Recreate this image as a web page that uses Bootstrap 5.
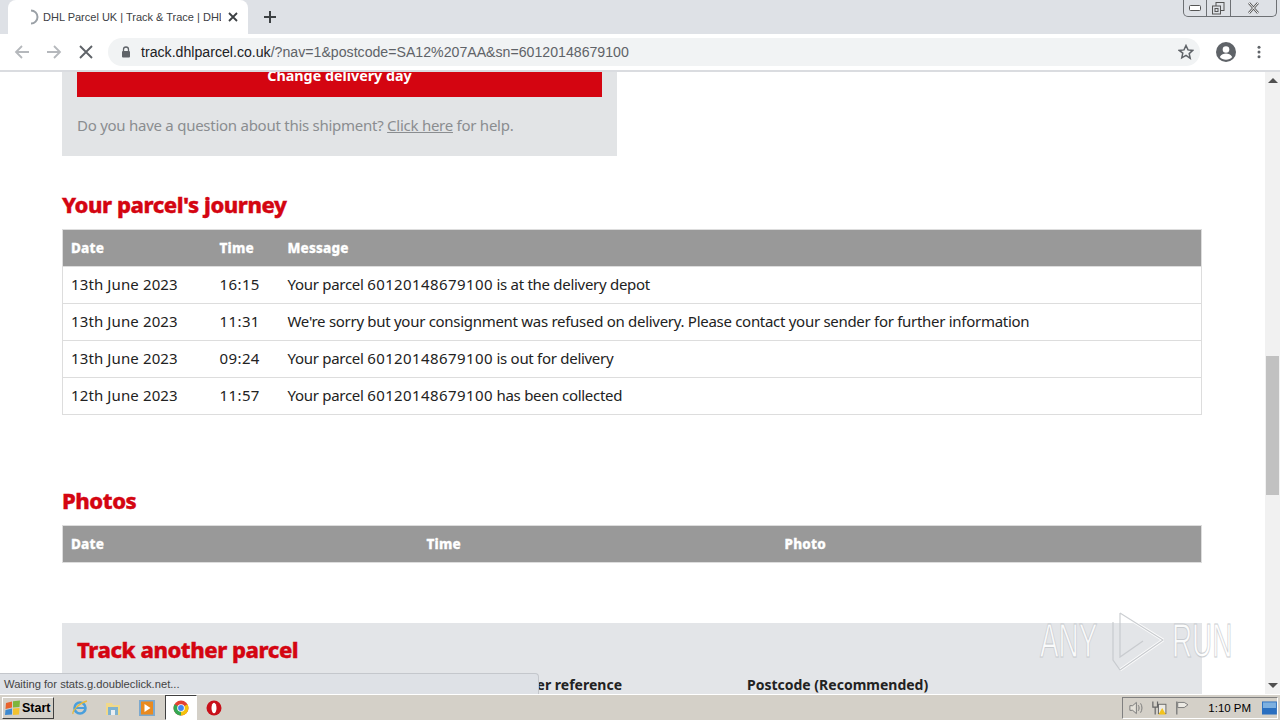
<!DOCTYPE html>
<html lang="en">
<head>
<meta charset="utf-8">
<title>DHL Parcel UK | Track &amp; Trace</title>
<link rel="stylesheet" href="https://cdn.jsdelivr.net/npm/bootstrap@5.3.0/dist/css/bootstrap.min.css">
<style>
html,body{height:720px;overflow:hidden;background:#fff}
body{font-family:"Noto Sans","Liberation Sans",sans-serif;position:relative}
.tabstrip{height:34px;background:#dee1e6;padding-left:8px}
.browsertab{width:240px;height:34px;background:#fff;border-radius:8px 8px 0 0;padding-left:16px;font:11px "Liberation Sans",sans-serif;color:#3c4043;white-space:nowrap}
.tabtitle{width:178px;overflow:hidden;margin-left:3px}
.tabclose{margin-left:7px}
.newtab{margin-left:15px;margin-bottom:10px}
.winbtns{margin-left:auto;margin-right:3px;height:17px;width:94px;border:1px solid #6d7074;border-top:0;border-radius:0 0 5px 5px;align-self:flex-start}
.winbtns>span{flex:1 1 auto;border-right:1px solid #6d7074}
.winbtns>span:last-child{border-right:0;flex:0 0 45px}
.toolbar{height:38px;background:#fff;border-bottom:2px solid #dadce0;padding-left:13px}
.navicon{width:18px;margin-right:14px}
.navstop{margin-right:9px}
.omnibox{margin-left:4px;width:1092px;height:28px;background:#f1f3f4;border-radius:14px;padding:0 6px 0 13px;font:14.15px "Liberation Sans",sans-serif;color:#202124;white-space:nowrap}
.urlrest{color:#5f6368}
.urltext{margin-left:10px}
.avatar{margin-left:16px}
.dots{margin-left:19px}
.pagearea{height:622px;overflow:hidden}
.pagecontent{width:1265px;height:622px;overflow:hidden}
.pageinner{padding-left:62px;width:1202px;margin-top:-24px}
.scrolltrack{width:15px;background:#f1f1f1;height:622px;position:relative}
.scrollthumb{position:absolute;left:1px;right:1px;top:284px;height:139px;background:#c1c1c1}
.scrollup,.scrolldown{position:absolute;left:3px;width:0;height:0;border-left:5px solid transparent;border-right:5px solid transparent}
.scrollup{top:6px;border-bottom:5px solid #505050}
.scrolldown{bottom:6px;border-top:5px solid #505050}
.greypanel{width:555px;height:108px;background:#e2e4e6;padding:0 15px}
.redbtn{height:49px;width:525px;background:#d40511;color:#fff;font-weight:700;font-size:14.3px;line-height:1;padding-top:21px;text-align:center;border-radius:0}
.helptext{margin-top:18px;font-size:15px;color:#8a8d90;line-height:20px;letter-spacing:-.26px}
.helptext a{color:#8a8d90}
.redhead{color:#d40511;font-weight:800;font-size:22px;line-height:30px;margin:0;letter-spacing:-.45px;-webkit-text-stroke:.4px #d40511}
.headjourney{margin-top:33px;margin-bottom:10px}
.headphotos{margin-top:70px;margin-bottom:10px}
.trktable{width:1140px;margin:0;border-collapse:collapse;table-layout:fixed;font-size:15px;color:#222}
.trktable th,.trktable td{padding:0 8px 2px;height:37px;border:1px solid #ddd;border-left-width:0;border-right-width:0;vertical-align:middle;white-space:nowrap;letter-spacing:-.29px}
.trktable tr>*:first-child{border-left-width:1px}
.trktable tr>*:last-child{border-right-width:1px}
.trktable th{background:#999;color:#fff;font-weight:800;font-size:13.5px;letter-spacing:.2px;-webkit-text-stroke:.3px #fff;padding-bottom:0}
.trktable td.datecell{letter-spacing:.12px}
.trktable td.timecell{letter-spacing:.4px}
.parcelnum{letter-spacing:.4px}
.trackpanel{margin-top:60px;width:1140px;height:100px;background:#e3e5e8;padding:11px 15px 0}
.trackfields{display:grid;grid-template-columns:545px 125px 1fr;margin-top:11px;font-weight:700;font-size:14px;line-height:20px;color:#222;white-space:nowrap}
.fieldone{text-align:right}
.fieldtwo{grid-column:3}
.statusbubble{position:absolute;left:0;top:673px;width:539px;height:21px;background:#dee1e6;border:1px solid #c4c7cc;border-left:0;border-bottom:0;border-radius:0 4px 0 0;font:11.2px/20px "Liberation Sans",sans-serif;color:#444;padding-left:4px}
.taskbar{height:26px;background:#d4d0c8;border-top:1px solid #fff;padding-left:2px}
.startbtn{width:52px;height:22px;background:#d4d0c8;border:1px solid;border-color:#fff #404040 #404040 #fff;font:700 12.5px "Liberation Sans",sans-serif;color:#000;padding-left:1px;gap:1px}
.tbicon{width:18px;height:18px}
.tbiconwrap{width:32px;height:25px;background:#fff;border:1px solid;border-color:#404040 #fff #fff #404040}
.taskicons{margin-left:17px}
.gapa{margin-right:15px}
.gapb{margin-right:16px}
.gapc{margin-right:9px}
.tray{margin-left:auto;margin-right:2px;height:22px;width:156px;border:1px solid;border-color:#808080 #fff #fff #808080;font:11.5px "Liberation Sans",sans-serif;color:#000;padding-left:5px;white-space:nowrap}
.trayflag{margin-left:6px}
.clock{margin-left:18px}
.trayshow{margin-left:11px}
.anywm{position:absolute;left:1040px;top:610px;opacity:.85;pointer-events:none;height:62px}
.anyword{display:inline-block;width:60px;overflow:visible;font:400 48px/62px "Liberation Sans",sans-serif;color:#fff;-webkit-text-stroke:1px #c4c7cb;transform:scaleX(.58);transform-origin:left center}
.logoplay{margin:0 8px 0 12px}
</style>
</head>
<body>
<div class="tabstrip d-flex align-items-end">
  <div class="browsertab d-flex align-items-center">
    <svg width="16" height="16" viewBox="0 0 16 16"><path d="M7 1.500a6.500 6.500 0 0 1 0 13" fill="none" stroke="#9aa0a6" stroke-width="2"/></svg>
    <span class="tabtitle">DHL Parcel UK | Track &amp; Trace | DHL</span>
    <svg class="tabclose" width="10" height="10" viewBox="0 0 10 10"><path d="M1 1l8 8M9 1l-8 8" stroke="#3c4043" stroke-width="1.800"/></svg>
  </div>
  <svg class="newtab" width="14" height="14" viewBox="0 0 14 14"><path d="M7 1v12M1 7h12" stroke="#3c4043" stroke-width="2"/></svg>
  <div class="winbtns d-flex">
    <span class="d-flex align-items-center justify-content-center"><svg width="12" height="6" viewBox="0 0 12 6"><rect x=".5" y=".5" width="11" height="5" rx="1" fill="#fff" stroke="#555"/></svg></span>
    <span class="d-flex align-items-center justify-content-center"><svg width="13" height="13" viewBox="0 0 13 13"><rect x="4" y=".5" width="8" height="8" fill="none" stroke="#555"/><rect x=".5" y="4" width="8" height="8" fill="#dee1e6" stroke="#555"/><rect x="3" y="6.500" width="3" height="3" fill="none" stroke="#555"/></svg></span>
    <span class="d-flex align-items-center justify-content-center"><svg width="13" height="12" viewBox="0 0 13 12"><path d="M2 1l9 10M11 1L2 11" stroke="#555" stroke-width="2.600"/><path d="M2 1l9 10M11 1L2 11" stroke="#fff" stroke-width="1"/></svg></span>
  </div>
</div>
<div class="toolbar d-flex align-items-center">
  <svg class="navicon" width="18" height="16" viewBox="0 0 18 16"><path d="M16 8H3M9 2L3 8l6 6" fill="none" stroke="#b5b8bc" stroke-width="1.800"/></svg>
  <svg class="navicon" width="18" height="16" viewBox="0 0 18 16"><path d="M2 8h13M9 2l6 6-6 6" fill="none" stroke="#b5b8bc" stroke-width="1.800"/></svg>
  <svg class="navicon navstop" width="14" height="14" viewBox="0 0 14 14"><path d="M1 1l12 12M13 1L1 13" stroke="#5f6368" stroke-width="1.900"/></svg>
  <div class="omnibox d-flex align-items-center">
    <svg width="10" height="12" viewBox="0 0 10 12"><path d="M2.500 5V3.500a2.500 2.500 0 0 1 5 0V5" fill="none" stroke="#5f6368" stroke-width="1.300"/><rect x="1" y="5" width="8" height="6.500" rx="1" fill="#5f6368"/></svg>
    <span class="urltext">track.dhlparcel.co.uk<span class="urlrest">/?nav=1&amp;postcode=SA12%207AA&amp;sn=60120148679100</span></span>
    <svg class="ms-auto" width="16" height="16" viewBox="0 0 16 16"><path d="M8 1.500l2 4.400 4.800.5-3.600 3.200 1 4.700L8 11.400l-4.200 2.400 1-4.700L1.200 6.400 6 5.900z" fill="none" stroke="#5f6368" stroke-width="1.500"/></svg>
  </div>
  <svg class="avatar" width="20" height="20" viewBox="0 0 20 20"><circle cx="10" cy="10" r="10" fill="#5f6368"/><circle cx="10" cy="7.500" r="3.300" fill="#fff"/><path d="M3.800 15c1.500-2.600 3.800-3.400 6.200-3.400s4.700.8 6.200 3.400c-1.500 1.700-3.700 2.800-6.200 2.800s-4.700-1.100-6.200-2.800z" fill="#fff"/></svg>
  <svg class="dots" width="8" height="14" viewBox="0 0 8 14"><circle cx="4" cy="2.200" r="1.500" fill="#5f6368"/><circle cx="4" cy="7" r="1.500" fill="#5f6368"/><circle cx="4" cy="11.800" r="1.500" fill="#5f6368"/></svg>
</div>
<div class="pagearea d-flex">
  <div class="pagecontent">
    <div class="pageinner">
      <div class="greypanel">
        <div class="redbtn">Change delivery day</div>
        <p class="helptext mb-0">Do you have a question about this shipment? <a href="#">Click here</a> for help.</p>
      </div>
      <h2 class="redhead headjourney">Your parcel's journey</h2>
      <table class="trktable">
        <colgroup><col style="width:149px"><col style="width:68px"><col></colgroup>
        <thead><tr><th>Date</th><th>Time</th><th>Message</th></tr></thead>
        <tbody>
          <tr><td class="datecell">13th June 2023</td><td class="timecell">16:15</td><td>Your parcel <span class="parcelnum">60120148679100</span> is at the delivery depot</td></tr>
          <tr><td class="datecell">13th June 2023</td><td class="timecell">11:31</td><td>We're sorry but your consignment was refused on delivery. Please contact your sender for further information</td></tr>
          <tr><td class="datecell">13th June 2023</td><td class="timecell">09:24</td><td>Your parcel <span class="parcelnum">60120148679100</span> is out for delivery</td></tr>
          <tr><td class="datecell">12th June 2023</td><td class="timecell">11:57</td><td>Your parcel <span class="parcelnum">60120148679100</span> has been collected</td></tr>
        </tbody>
      </table>
      <h2 class="redhead headphotos">Photos</h2>
      <table class="trktable">
        <colgroup><col style="width:356px"><col style="width:358px"><col></colgroup>
        <thead><tr><th>Date</th><th>Time</th><th>Photo</th></tr></thead>
      </table>
      <div class="trackpanel">
        <h2 class="redhead">Track another parcel</h2>
        <div class="trackfields">
          <div class="fieldone">Parcel number or customer reference</div>
          <div class="fieldtwo">Postcode (Recommended)</div>
        </div>
      </div>
    </div>
  </div>
  <div class="scrolltrack"><div class="scrollup"></div><div class="scrollthumb"></div><div class="scrolldown"></div></div>
</div>
<div class="statusbubble">Waiting for stats.g.doubleclick.net...</div>
<div class="taskbar d-flex align-items-center">
  <div class="startbtn d-flex align-items-center">
    <svg width="17" height="16" viewBox="0 0 17 16"><path d="M2 3l6-1.500v6L1.500 9z" fill="#e8622c"/><path d="M9 1.300l7-.8-.5 6.500L9 7.500z" fill="#7db53c"/><path d="M1.500 10L8 8.500v6L1 15z" fill="#3f8ad0"/><path d="M9 8.500l6.500-.5-.5 6.500-6 .5z" fill="#f2c230"/></svg>
    <span>Start</span>
  </div>
  <div class="taskicons d-flex align-items-center">
    <svg class="tbicon gapa" viewBox="0 0 18 18"><circle cx="9" cy="9" r="5.500" fill="none" stroke="#4a9fdc" stroke-width="2.600"/><path d="M3.500 9h11" stroke="#4a9fdc" stroke-width="2"/><path d="M2 15c-1-3 6-11 14-13" fill="none" stroke="#e6b93a" stroke-width="1.300"/></svg>
    <svg class="tbicon gapb" viewBox="0 0 18 18"><path d="M2 4h6l1 2h7v10H2z" fill="#f1d98a"/><rect x="4" y="8" width="10" height="8" fill="#7fb2cf"/><rect x="7" y="11" width="4" height="5" fill="#e9eef2"/></svg>
    <svg class="tbicon gapc" viewBox="0 0 18 18"><rect x="1" y="1" width="16" height="16" fill="#7ca9cf"/><rect x="3" y="2.500" width="12" height="13" fill="#e98a1f"/><path d="M6.500 5l6 4-6 4z" fill="#fff"/></svg>
    <div class="tbiconwrap gapc d-flex align-items-center justify-content-center">
      <svg width="16" height="16" viewBox="0 0 16 16"><circle cx="8" cy="8" r="7.500" fill="#e34133"/><path d="M8 8L14.500 4.300A7.500 7.500 0 0 1 8 15.500z" fill="#f4c20d"/><path d="M8 8L8 15.500A7.500 7.500 0 0 1 1.500 4.300z" fill="#34a853"/><circle cx="8" cy="8" r="3.800" fill="#fff"/><circle cx="8" cy="8" r="2.900" fill="#4285f4"/></svg>
    </div>
    <svg width="16" height="16" viewBox="0 0 16 16"><circle cx="8" cy="8" r="7.500" fill="#c8101a"/><ellipse cx="8" cy="8" rx="2.500" ry="5.300" fill="#fff"/></svg>
  </div>
  <div class="tray d-flex align-items-center">
    <svg width="18" height="16" viewBox="0 0 18 16"><path d="M2 5.500h3L9 2v12l-4-3.500H2z" fill="#e5e2da" stroke="#777"/><path d="M11 5c1.200 1.800 1.200 4.200 0 6M13.500 3c2 3 2 7 0 10" fill="none" stroke="#777"/></svg>
    <svg class="trayflag" width="18" height="16" viewBox="0 0 18 16"><path d="M2 1v6h5V1M4.500 7v8" fill="none" stroke="#666" stroke-width="1.300"/><rect x="8" y="4" width="8" height="10" fill="#eceae4" stroke="#666"/><path d="M12 8l4 7H8z" fill="#f3c31c"/></svg>
    <svg class="trayflag" width="18" height="16" viewBox="0 0 18 16"><path d="M3 1v14" stroke="#777" stroke-width="1.400"/><path d="M4 2h7l4 2.500-4 3H4z" fill="#eceae4" stroke="#777"/></svg>
    <span class="clock">1:10 PM</span>
    <svg class="trayshow" width="16" height="14" viewBox="0 0 16 14"><rect width="16" height="14" fill="#2a6fc0"/><rect x="1" y="1" width="14" height="6" fill="#7db0e0"/></svg>
  </div>
</div>
<div class="anywm d-flex align-items-center">
  <span class="anyword">ANY</span>
  <svg class="logoplay" width="52" height="62" viewBox="0 0 52 62"><path d="M8 3L51 30 8 60" fill="none" stroke="#fff" stroke-width="3"/><path d="M8 3L51 30 8 60M1 12V50L8 60M8 3V47L31 31" fill="none" stroke="#c4c7cb" stroke-width="1.200"/></svg>
  <span class="anyword">RUN</span>
</div>
</body>
</html>
